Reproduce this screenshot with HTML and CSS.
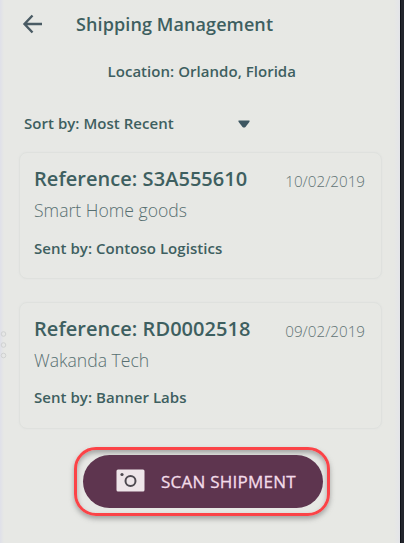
FILE: index.html
```
<!DOCTYPE html>
<html lang="en">
<head>
<meta charset="utf-8">
<title>Shipping Management</title>
<link rel="stylesheet" href="styles.css">
</head>
<body>
<main class="screen">
  <header class="header">
    <svg class="back" viewBox="0 0 22 22"><path d="M20 11H3M10.500 2.500L2.500 11l8 8.500"/></svg>
    <h1 class="title">Shipping Management</h1>
  </header>
  <p class="location">Location: Orlando, Florida</p>
  <div class="sort">
    <span class="sort-label">Sort by: Most Recent</span>
    <svg class="caret" viewBox="0 0 12 8"><path d="M.5.5h11v1.200L7.500 7q-1.500 1.200-3 0L.5 1.700z"/></svg>
  </div>
  <section class="cards">
    <article class="card">
      <div class="card-top"><h2 class="ref">Reference: S3A555610</h2><time class="date">10/02/2019</time></div>
      <p class="goods">Smart Home goods</p>
      <p class="sender">Sent by: Contoso Logistics</p>
    </article>
    <article class="card">
      <div class="card-top"><h2 class="ref">Reference: RD0002518</h2><time class="date">09/02/2019</time></div>
      <p class="goods">Wakanda Tech</p>
      <p class="sender">Sent by: Banner Labs</p>
    </article>
  </section>
  <div class="highlight">
    <button class="scan">
      <svg class="camera" viewBox="0 0 29 23"><rect x=".5" y=".5" width="28" height="22" rx="1.500"/><circle class="lens" cx="14.500" cy="12" r="5"/><circle class="dot" cx="6" cy="5.500" r="1.600"/></svg>
      <span class="scan-label">SCAN SHIPMENT</span>
    </button>
  </div>
  <svg class="handle" viewBox="0 0 8 30"><circle cx="3.500" cy="4" r="2.300"/><circle cx="3.500" cy="15" r="2.300"/><circle cx="3.500" cy="25.500" r="2.300"/></svg>
</main>
</body>
</html>
```
FILE: styles.css
```
* { box-sizing: border-box; margin: 0; padding: 0; }
body {
  width: 404px;
  height: 543px;
  overflow: hidden;
  background: #23252d;
  font-family: "Open Sans", sans-serif;
  color: #3e5f60;
}
.screen {
  position: relative;
  width: 401px;
  height: 543px;
  padding-top: 12px;
  background: linear-gradient(90deg, #dfe0e9 0, #e7e8e5 4px, #e7e8e4 394px, #e3e4e9 400px);
  border-right: 1px solid #0f1218;
}
.header { display: flex; align-items: center; height: 24px; padding-left: 22px; }
.back { width: 22px; height: 22px; fill: none; stroke: #4a5b64; stroke-width: 2.4; }
.title { margin-left: 32px; font-size: 18px; line-height: 24px; font-weight: 600; letter-spacing: .1px; }
.location { margin: 25px 0 0 107.5px; font-size: 15px; line-height: 20px; font-weight: 600; letter-spacing: .04px; }
.sort { display: flex; align-items: center; justify-content: space-between; width: 226px; margin: 32px 0 0 24px; }
.sort-label { font-size: 15px; line-height: 20px; font-weight: 600; letter-spacing: .04px; }
.caret { width: 12px; height: 8px; margin-top: 2px; fill: #3d5661; }
.cards { display: flex; flex-direction: column; gap: 23px; margin: 19px 0 0 19px; width: 363px; }
.card {
  height: 127px;
  padding: 12px 16px 0 14px;
  border: 1px solid #dfe1de;
  border-radius: 8px;
  box-shadow: 0 0 2px #dfe0df;
}
.card-top { display: flex; justify-content: space-between; height: 28px; }
.ref { font-size: 20px; line-height: 28px; font-weight: 600; letter-spacing: .05px; }
.date { padding-top: 4px; font-size: 15.2px; line-height: 25px; font-weight: 300; color: #617374; }
.goods { margin-top: 5px; font-size: 17.6px; line-height: 24px; font-weight: 300; color: #576f71; }
.sender { margin-top: 16px; font-size: 15px; line-height: 20px; font-weight: 600; letter-spacing: .04px; }
.card:nth-child(2) .sender { margin-top: 15px; }
.card:nth-child(2) .goods { margin-top: 5px; }
.highlight {
  width: 256px;
  height: 69px;
  margin: 18px 0 0 74px;
  padding: 5px 6px;
  border: 3px solid #fb4347;
  border-radius: 22px;
  box-shadow: 0 3px 5px #77777799, inset 0 3px 5px #77777799;
}
.scan {
  display: flex;
  align-items: center;
  width: 240px;
  height: 53px;
  padding-left: 33px;
  border: 0;
  border-radius: 27px;
  background: #5e354f;
  color: #f3dce9;
  font-family: inherit;
}
.camera { width: 29px; height: 23px; margin-top: -3px; fill: #eee5e9; }
.lens { fill: none; stroke: #4e4950; stroke-width: 2; }
.dot { fill: #4e4950; }
.scan-label { margin: -1px 0 0 16px; font-size: 17px; letter-spacing: .25px; -webkit-text-stroke: .3px #f3dce9; white-space: nowrap; }
.handle { position: absolute; left: 0; top: 330px; width: 8px; height: 30px; fill: none; stroke: #d0d2d2; stroke-width: 1; }
```
